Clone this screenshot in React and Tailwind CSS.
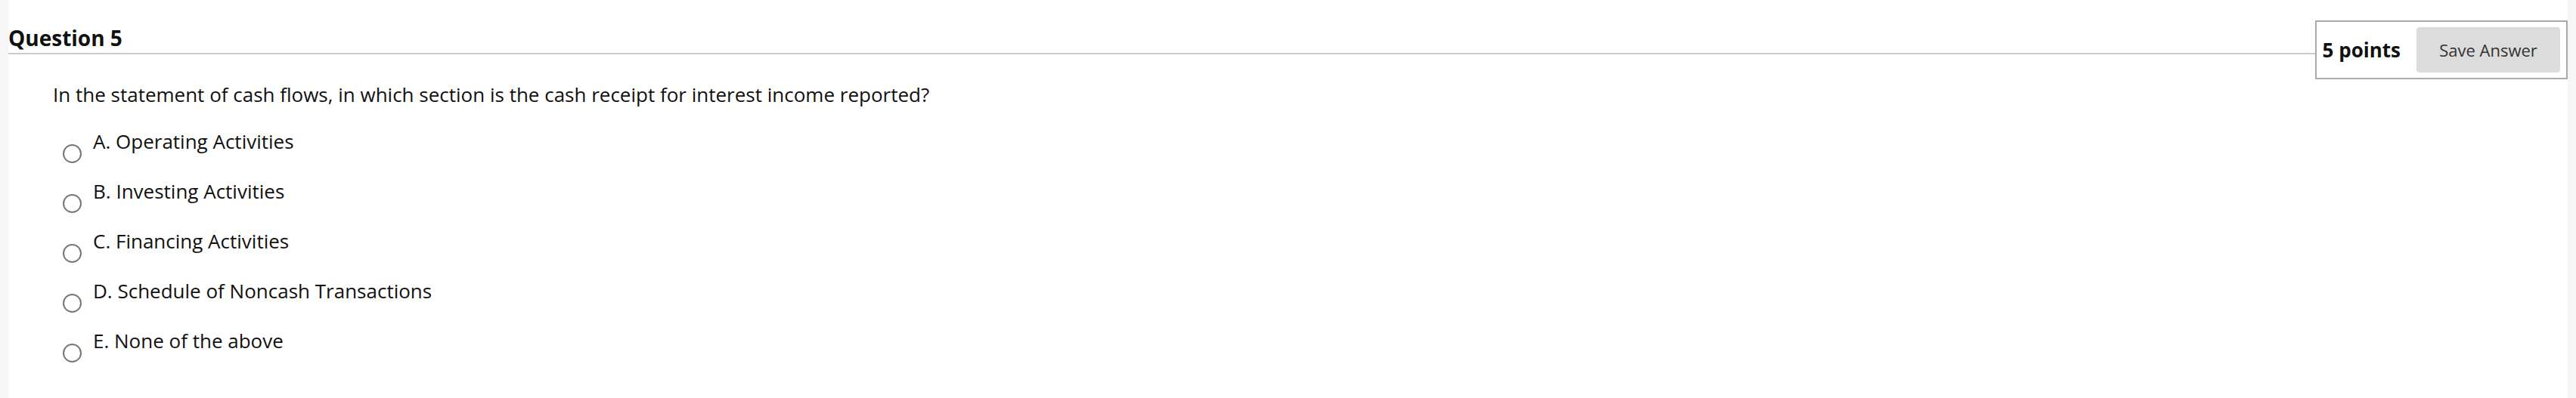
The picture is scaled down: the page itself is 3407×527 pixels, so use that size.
const OPTIONS = [
  'A. Operating Activities',
  'B. Investing Activities',
  'C. Financing Activities',
  'D. Schedule of Noncash Transactions',
  'E. None of the above',
]

function Radio() {
  return (
    <span className="mt-[22px] block h-[25px] w-[25px] shrink-0 rounded-full border-2 border-[#777777] bg-white" />
  )
}

export default function App() {
  return (
    <div
      className="flex h-[527px] w-full bg-white text-[#111111]"
      style={{ fontFamily: '"Open Sans", "Liberation Sans", sans-serif' }}
    >
      <div className="w-[11px] shrink-0 bg-[#f6f6f6]" />

      <main className="flex min-w-0 flex-1 flex-col">
        <header className="flex items-start">
          <div className="flex-1 border-b-2 border-[#cccccc] pt-[31px]">
            <h2 className="text-[28px] font-bold leading-[39px]">Question 5</h2>
          </div>
          <div className="mt-[27px] -ml-px flex items-center gap-[21px] border-2 border-[#aaaaaa] bg-white py-[7px] pl-[8px] pr-[8px]">
            <span className="text-[26px] font-bold leading-[36px]">5 points</span>
            <button
              type="button"
              className="h-[60px] w-[190px] rounded-[4px] bg-[#dcdcdc] text-[22px] text-[#333333]"
            >
              Save Answer
            </button>
          </div>
        </header>

        <div className="pl-[59px] pt-[2px]">
          <p className="text-[26px] leading-[36px]">
            In the statement of cash flows, in which section is the cash receipt for interest income reported?
          </p>

          <ul className="mt-[26px] pl-[13px]">
            {OPTIONS.map((label) => (
              <li key={label} className="flex h-[66px] items-start gap-[15px]">
                <Radio />
                <span className="text-[26px] leading-[36px]">{label}</span>
              </li>
            ))}
          </ul>
        </div>
      </main>

      <div className="w-[11px] shrink-0 bg-[#f6f6f6]" />
    </div>
  )
}
